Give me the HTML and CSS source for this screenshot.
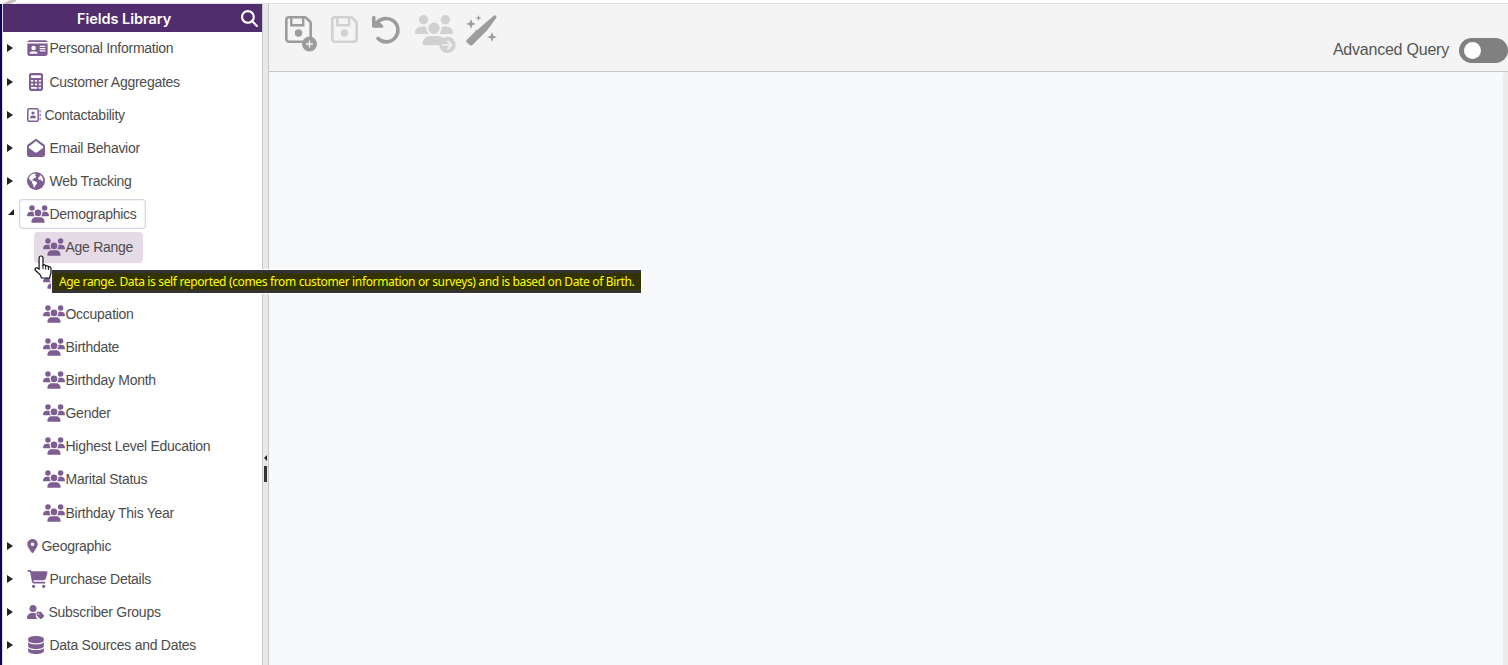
FILE: index.html
```html
<!DOCTYPE html>
<html lang="en">
<head>
    <meta charset="UTF-8">
    <meta name="viewport" content="width=device-width, initial-scale=1.0">
    <title>Fields Library</title>
    <link rel="stylesheet" href="styles.css">
</head>
<body>
    <svg class="sprite">
        <symbol id="users" viewBox="0 0 640 512"><path d="M144 0a80 80 0 1 1 0 160A80 80 0 1 1 144 0zM512 0a80 80 0 1 1 0 160A80 80 0 1 1 512 0zM0 298.7C0 239.8 47.8 192 106.7 192h42.7c15.9 0 31 3.5 44.6 9.7c-1.3 7.2-1.9 14.7-1.9 22.3c0 38.2 16.8 72.5 43.3 96H21.3C9.6 320 0 310.4 0 298.7zM405.3 320c26.6-23.5 43.3-57.8 43.3-96c0-7.6-.7-15-1.9-22.3c13.6-6.3 28.7-9.7 44.6-9.7h42.7C592.2 192 640 239.8 640 298.7c0 11.8-9.6 21.3-21.3 21.3H405.3zM224 224a96 96 0 1 1 192 0 96 96 0 1 1 -192 0zM128 485.3C128 411.7 187.7 352 261.3 352H378.7C452.3 352 512 411.7 512 485.3c0 14.7-11.9 26.7-26.7 26.7H154.7c-14.7 0-26.7-11.9-26.7-26.7z"/></symbol>
        <symbol id="card" viewBox="0 0 576 512"><path fill-rule="evenodd" d="M0 86C0 55 28.700 32 64 32h448c35.300 0 64 23 64 54zM0 128h576v288c0 35.300-28.700 64-64 64H64c-35.300 0-64-28.700-64-64zM64 405.300c0 5.900 4.800 10.700 10.700 10.700h202.600c5.900 0 10.700-4.800 10.700-10.700c0-29.500-23.900-53.300-53.300-53.300H117.300c-29.500 0-53.300 23.900-53.300 53.300zM176 192a64 64 0 1 0 0 128a64 64 0 1 0 0-128zM352 192v32h160v-32zM352 256v32h160v-32zM352 320v32h160v-32z"/></symbol>
        <symbol id="calc" viewBox="0 0 384 576" preserveAspectRatio="none"><path fill-rule="evenodd" d="M64 0h256c35.300 0 64 28.700 64 64v448c0 35.300-28.700 64-64 64H64c-35.300 0-64-28.700-64-64V64C0 28.700 28.700 0 64 0zM56 68v92h272V68zM56 220v60h60v-60zM162 220v60h60v-60zM268 220v60h60v-60zM56 335v60h60v-60zM162 335v60h60v-60zM268 335v60h60v-60zM56 450v56h166v-56zM268 450v56h60v-56z"/></symbol>
        <symbol id="book" viewBox="0 0 14 14"><rect x="0.800" y="0.800" width="10.400" height="12.400" rx="1.300" fill="none" stroke="currentColor" stroke-width="1.500"/><circle cx="6" cy="5" r="1.600"/><path d="M3 10.200c0-1.700 1-2.700 2.300-2.700h1.400C8 7.500 9 8.500 9 10.200z"/><path d="M12.600 2h1v2.500h-1zM12.600 5.800h1v2.500h-1zM12.600 9.500h1V12h-1z"/></symbol>
        <symbol id="mail" viewBox="0 0 512 512"><path fill-rule="evenodd" d="M48 218L256 60 464 218v30L289.500 380c-9.700 7.200-21.400 11-33.500 11s-23.800-3.900-33.500-11L48 248zM256 0c-12.100 0-23.800 3.900-33.500 11L25.900 156.700C9.600 168.800 0 187.800 0 208.100V448c0 35.300 28.700 64 64 64h384c35.300 0 64-28.700 64-64V208.100c0-20.300-9.600-39.400-25.900-51.400L289.500 11C279.800 3.900 268.100 0 256 0z"/></symbol>
        <symbol id="globe" viewBox="0 0 19 19"><circle cx="9.500" cy="9.500" r="9.500"/><path fill="#fff" d="M3 4.600 5.100 2.500 8.300 1.700 9.500 2.600 8.300 4 9.700 4.600 9 6 7.300 6.500 6.600 8 5.200 8.100 6.300 9.200 8.300 9.400 10.700 11 10.200 12.800 8.800 14.100 8.200 16.200 7.200 16.300 6.600 13.400 5.300 11.700 5.200 10.100 2.900 8.200 2 6.500zM13.300 3 15.500 4.400 16.900 7 17.100 9.600 15.900 9.900 14.800 8.300 12.700 8.100 11.700 6.700 12.600 5 14 4.700z"/></symbol>
        <symbol id="pin" viewBox="0 0 384 512"><path d="M215.700 499.200C267 435 384 279.400 384 192C384 86 298 0 192 0S0 86 0 192c0 87.400 117 243 168.300 307.200c12.300 15.300 35.100 15.300 47.400 0zM192 128a64 64 0 1 1 0 128 64 64 0 1 1 0-128z"/></symbol>
        <symbol id="cart" viewBox="0 0 576 512"><path d="M0 24C0 10.700 10.700 0 24 0H69.500c22 0 41.500 12.800 50.600 32h411c26.300 0 45.500 25 38.600 50.400l-41 152.300c-8.500 31.400-37 53.300-69.500 53.300H170.700l5.400 28.500c2.200 11.300 12.100 19.500 23.600 19.500H488c13.300 0 24 10.700 24 24s-10.700 24-24 24H199.700c-34.600 0-64.300-24.600-70.700-58.500L77.400 54.500c-.7-3.800-4-6.500-7.900-6.500H24C10.700 48 0 37.300 0 24zM128 464a48 48 0 1 1 96 0 48 48 0 1 1 -96 0zm336-48a48 48 0 1 1 0 96 48 48 0 1 1 0-96z"/></symbol>
        <symbol id="usertag" viewBox="0 0 17 14"><circle cx="6" cy="3.500" r="3.500"/><path d="M0 13c0-3 2.200-5 5-5h2c.7 0 1.300.1 1.800.3v2.900c0 .6.200 1.100.6 1.500l1.200 1.300H.8c-.5 0-.8-.4-.8-1z"/><path fill-rule="evenodd" d="M10.400 6.800h2.900c.4 0 .7.100 1 .4l2.400 2.700c.5.500.5 1.300 0 1.800l-2 2c-.5.400-1.200.4-1.700 0l-3-2.900c-.3-.3-.4-.6-.4-1V7.600c0-.5.300-.8.800-.8zM11.600 8.300a.7.700 0 1 0 0 1.400a.7.700 0 1 0 0-1.400z"/></symbol>
        <symbol id="database" viewBox="0 0 448 512"><path d="M448 80v48c0 44.200-100.300 80-224 80S0 172.200 0 128V80C0 35.800 100.300 0 224 0S448 35.800 448 80zM393.200 214.700c20.800-7.400 39.900-16.900 54.800-28.600V288c0 44.200-100.300 80-224 80S0 332.200 0 288V186.100c14.900 11.800 34 21.200 54.800 28.600C99.700 230.700 159.500 240 224 240s124.300-9.300 169.200-25.300zM0 346.100c14.900 11.800 34 21.200 54.800 28.600C99.700 390.700 159.500 400 224 400s124.300-9.300 169.200-25.300c20.800-7.400 39.900-16.900 54.800-28.600V432c0 44.200-100.300 80-224 80S0 476.200 0 432V346.100z"/></symbol>
        <symbol id="search" viewBox="0 0 512 512"><path d="M416 208c0 45.900-14.900 88.300-40 122.700L502.600 457.400c12.500 12.500 12.500 32.800 0 45.300s-32.800 12.500-45.300 0L330.700 376c-34.400 25.200-76.800 40-122.700 40C93.100 416 0 322.900 0 208S93.100 0 208 0S416 93.100 416 208zM208 352a144 144 0 1 0 0-288 144 144 0 1 0 0 288z"/></symbol>
        <symbol id="floppy" viewBox="0 0 27 27"><path d="M4 1.300h15.500c.8 0 1.500.3 2 .8l3.400 3.400c.5.500.8 1.200.8 2V23c0 1.500-1.200 2.700-2.700 2.700H4A2.700 2.700 0 0 1 1.300 23V4C1.300 2.500 2.500 1.300 4 1.300z" fill="none" stroke="currentColor" stroke-width="2.600"/><path d="M6.300 1.500v7.700h11.900V1.500" fill="none" stroke="currentColor" stroke-width="2.400"/><circle cx="13.500" cy="17" r="3.700"/></symbol>
    </svg>

    <div class="topbar"></div>
    <div class="app">
        <div class="sidebar">
            <div class="header">
                <span class="title">Fields Library</span>
                <svg class="search"><use href="#search"/></svg>
            </div>
            <ul class="tree">
                <li><i class="arrow"></i><svg class="icon wide"><use href="#card"/></svg><span>Personal Information</span></li>
                <li><i class="arrow"></i><svg class="icon calc"><use href="#calc"/></svg><span>Customer Aggregates</span></li>
                <li><i class="arrow"></i><svg class="icon small"><use href="#book"/></svg><span>Contactability</span></li>
                <li><i class="arrow"></i><svg class="icon square"><use href="#mail"/></svg><span>Email Behavior</span></li>
                <li><i class="arrow"></i><svg class="icon square"><use href="#globe"/></svg><span>Web Tracking</span></li>
                <li class="open"><i class="arrow down"></i><div class="focus"><svg class="icon users"><use href="#users"/></svg><span>Demographics</span></div></li>
                <li class="child"><div class="selected"><svg class="icon users"><use href="#users"/></svg><span>Age Range</span></div></li>
                <li class="child"><svg class="icon users"><use href="#users"/></svg></li>
                <li class="child"><svg class="icon users"><use href="#users"/></svg><span>Occupation</span></li>
                <li class="child"><svg class="icon users"><use href="#users"/></svg><span>Birthdate</span></li>
                <li class="child"><svg class="icon users"><use href="#users"/></svg><span>Birthday Month</span></li>
                <li class="child"><svg class="icon users"><use href="#users"/></svg><span>Gender</span></li>
                <li class="child"><svg class="icon users"><use href="#users"/></svg><span>Highest Level Education</span></li>
                <li class="child"><svg class="icon users"><use href="#users"/></svg><span>Marital Status</span></li>
                <li class="child"><svg class="icon users"><use href="#users"/></svg><span>Birthday This Year</span></li>
                <li><i class="arrow"></i><svg class="icon pin"><use href="#pin"/></svg><span>Geographic</span></li>
                <li><i class="arrow"></i><svg class="icon wide"><use href="#cart"/></svg><span>Purchase Details</span></li>
                <li><i class="arrow"></i><svg class="icon tag"><use href="#usertag"/></svg><span>Subscriber Groups</span></li>
                <li><i class="arrow"></i><svg class="icon square"><use href="#database"/></svg><span>Data Sources and Dates</span></li>
            </ul>
        </div>
        <div class="splitter"><i class="collapse"></i><i class="grip"></i></div>
        <div class="main">
            <div class="toolbar">
                <div class="tools">
                    <svg class="tool save-as" viewBox="0 0 32 36">
                        <use href="#floppy" width="27" height="27"/>
                        <circle cx="24.500" cy="28" r="7.500"/>
                        <path d="M24.500 24.500v7M21 28h7" stroke="#f4f4f4" stroke-width="1.400"/>
                    </svg>
                    <svg class="tool save off"><use href="#floppy"/></svg>
                    <svg class="tool undo" viewBox="0 0 28 27">
                        <path d="M4.600 7.500A11.700 11.700 0 1 1 6 22.500" fill="none" stroke="currentColor" stroke-width="3.600" stroke-linecap="round"/>
                        <path d="M0 1.500C0 .6.700 0 1.500 0h.6c.8 0 1.400.6 1.400 1.400V5l2.500-.5 5 5c.8.800.3 2.200-.9 2.200H1.600C.7 11.700 0 11 0 10.100z"/>
                    </svg>
                    <svg class="tool group off" viewBox="0 0 42 39">
                        <use href="#users" width="38" height="30.400"/>
                        <circle cx="32.500" cy="30" r="8.200"/>
                        <path d="M28 30h8.500M33 26.300l3.700 3.700-3.700 3.700" fill="none" stroke="#f4f4f4" stroke-width="1.700" stroke-linecap="round" stroke-linejoin="round"/>
                    </svg>
                    <svg class="tool wand" viewBox="0 0 31 31">
                        <path d="M28 .5c1-.8 3.100.9 2.300 2.200L21 15.500 6.300 29.900c-.8.900-1.800.9-2.600 0L.7 27.300c-.8-.8-.8-1.700 0-2.400L9.500 16.500c-.8-1 .2-1.900 1.800-1.500z"/>
                        <path d="M5 4l1.200 3.600L9.800 9l-3.600 1.300L5 14l-1.300-3.700L0 9l3.700-1.400zM12.500 0l.8 2.300 2.200.7-2.200.8-.8 2.300-.8-2.300L9.500 3l2.200-.7zM26 17l1.300 3.700L31 22l-3.700 1.300L26 27l-1.300-3.700L21 22l3.700-1.300z"/>
                    </svg>
                </div>
                <div class="query">
                    <span>Advanced Query</span>
                    <div class="toggle"><i></i></div>
                </div>
            </div>
            <div class="canvas"><div class="scrollbar"></div></div>
        </div>
    </div>
    <div class="corner"></div>

    <div class="tooltip"><span>Age range. Data is self reported (comes from customer information or surveys) and is based on Date of Birth.</span></div>
    <svg class="cursor" viewBox="0 0 18 24">
        <path d="M7 1c1.200 0 2 .8 2 2v7c.5-.5 2.300-.3 2.700.9.800-.5 2.300-.1 2.700.9 1-.4 2.600.2 2.600 1.700v4.300L15.500 23h-8L6 19.500 1.300 15.300c-.7-.9-.3-2 .5-2.300 1-.4 2.300.3 3.300 1V3c0-1.200.8-2 1.900-2z" fill="#fff" stroke="#111" stroke-width="1.200"/>
        <path d="M9 10v4M11.700 11v3.500M14.400 12v3" stroke="#111"/>
    </svg>
</body>
</html>
```

FILE: styles.css
```css
* {
    box-sizing: border-box;
}

body {
    margin: 0;
    height: 665px;
    overflow: hidden;
    font-family: "Liberation Sans", Arial, sans-serif;
    color: #4c4c4c;
    background-color: #fff;
}

svg {
    display: block;
    flex-shrink: 0;
    fill: currentColor;
}

.sprite {
    position: absolute;
    width: 0;
    height: 0;
}

.topbar {
    height: 4px;
    border-bottom: 1px solid #dcdce4;
}

.app {
    display: flex;
    height: 661px;
    border-left: 2px solid #12005a;
}

/* soft shadow of the rounded page corner */
.corner {
    position: absolute;
    left: 0;
    top: 0;
    width: 16px;
    height: 4px;
    background: linear-gradient(155deg, #fff 30%, #b5b5b5 60%, #fff 90%);
}

.sidebar {
    width: 261px;
    border-left: 1px solid #dcdce4;
    overflow: hidden;
}

.header {
    display: flex;
    align-items: center;
    justify-content: flex-end;
    height: 28px;
    padding-right: 5px;
    color: #fff;
    background-color: #522d6d;
}

.title {
    flex: 1;
    padding-left: 74px;
    font: 600 14.5px Inter, sans-serif;
    letter-spacing: -0.05px;
}

.search {
    width: 17px;
    height: 17px;
}

.tree {
    margin: -0.2px 0 0;
    padding: 0;
    list-style: none;
    font-size: 14px;
    letter-spacing: -0.27px;
    white-space: nowrap;
}

.tree li {
    display: flex;
    align-items: center;
    height: 33.17px;
    padding-left: 4px;
}

.tree li.child {
    padding-left: 40px;
}

.tree span {
    margin-left: 0.5px;
}

.arrow {
    width: 20px;
    flex-shrink: 0;
}

.arrow::before {
    content: "";
    display: block;
    width: 0;
    border: solid transparent;
    border-width: 4px 0 4px 6px;
    border-left-color: #222;
}

.arrow.down::before {
    margin: -5px 0 0 1px;
    border-width: 0 0 6px 6px;
    border-color: transparent transparent #222 transparent;
}

.icon {
    height: 18px;
    color: #7e5e92;
}

.wide {
    width: 21px;
    margin-right: 1px;
}

.square {
    width: 18px;
    margin-right: 4px;
}

.calc {
    width: 14px;
    margin: 0 6px 0 2px;
}

.small {
    width: 14px;
    height: 14px;
    margin-right: 3px;
}

.users {
    width: 22px;
}

.pin {
    width: 11px;
    height: 14px;
    margin-right: 3px;
}

.tag {
    width: 17px;
    height: 14px;
    margin-right: 4px;
}

.focus {
    display: flex;
    align-items: center;
    height: 30px;
    margin-left: -8px;
    padding: 0 8.5px 0 7px;
    border: 1px solid #dcd3e3;
    border-radius: 3px;
    box-shadow: inset 0 0 2px #dcd3e3;
}

.selected {
    display: flex;
    align-items: center;
    height: 31px;
    margin-left: -9px;
    padding: 0 9.5px 0 9px;
    border-radius: 4px;
    background-color: #e4dbe7;
}

.splitter {
    display: flex;
    flex-direction: column;
    align-items: center;
    width: 7px;
    margin-left: -1px;
    padding-top: 451px;
    border: solid #c8c8c8;
    border-width: 0 1px;
    background-color: #e8e8e8;
}

.collapse {
    border: solid transparent;
    border-width: 3px 3px 3px 0;
    border-right-color: #222;
}

.grip {
    width: 3px;
    height: 16px;
    margin-top: 5px;
    background-color: #333;
}

.main {
    flex: 1;
    display: flex;
    flex-direction: column;
}

.toolbar {
    display: flex;
    justify-content: space-between;
    height: 68px;
    border-bottom: 1px solid #c8c8c8;
    background-color: #f4f4f4;
}

.tools {
    display: flex;
    align-items: flex-start;
    padding: 11px 0 0 16px;
    color: #9c9c9c;
}

.tool {
    overflow: visible;
}

.off {
    color: #d1d1d1;
}

.save-as {
    width: 32px;
    height: 36px;
    margin-top: 1px;
}

.save {
    width: 27px;
    height: 27px;
    margin: 1px 0 0 14px;
}

.undo {
    width: 28px;
    height: 27px;
    margin: 1px 0 0 14px;
}

.group {
    width: 42px;
    height: 39px;
    margin-left: 15px;
}

.wand {
    width: 31px;
    height: 31px;
    margin-left: 9px;
}

.query {
    display: flex;
    align-items: center;
    padding-top: 25px;
    font-size: 16px;
    letter-spacing: -0.22px;
    color: #555;
}

.toggle {
    width: 49px;
    height: 25px;
    margin-left: 10px;
    padding: 4px 5px;
    border-radius: 13px;
    background-color: #808080;
}

.toggle i {
    display: block;
    width: 17px;
    height: 17px;
    border-radius: 50%;
    background-color: #fff;
}

.canvas {
    flex: 1;
    display: flex;
    justify-content: flex-end;
    background-color: #f8f9fb;
}

.scrollbar {
    width: 5px;
    border-radius: 4px 0 0 0;
    background-color: #ececec;
}

.tooltip {
    position: absolute;
    left: 52px;
    top: 270px;
    width: 589px;
    height: 23px;
    padding: 3px 0 3px 2px;
    background-color: #333;
    box-shadow: 0 0 0 1px #fff;
}

.tooltip span {
    display: block;
    height: 17px;
    padding-left: 5px;
    font: 12px/18px "Noto Sans", sans-serif;
    letter-spacing: -0.35px;
    white-space: nowrap;
    color: #ff0;
    background-color: #330;
}

.cursor {
    position: absolute;
    left: 34px;
    top: 255px;
    width: 18px;
    height: 24px;
}
```
